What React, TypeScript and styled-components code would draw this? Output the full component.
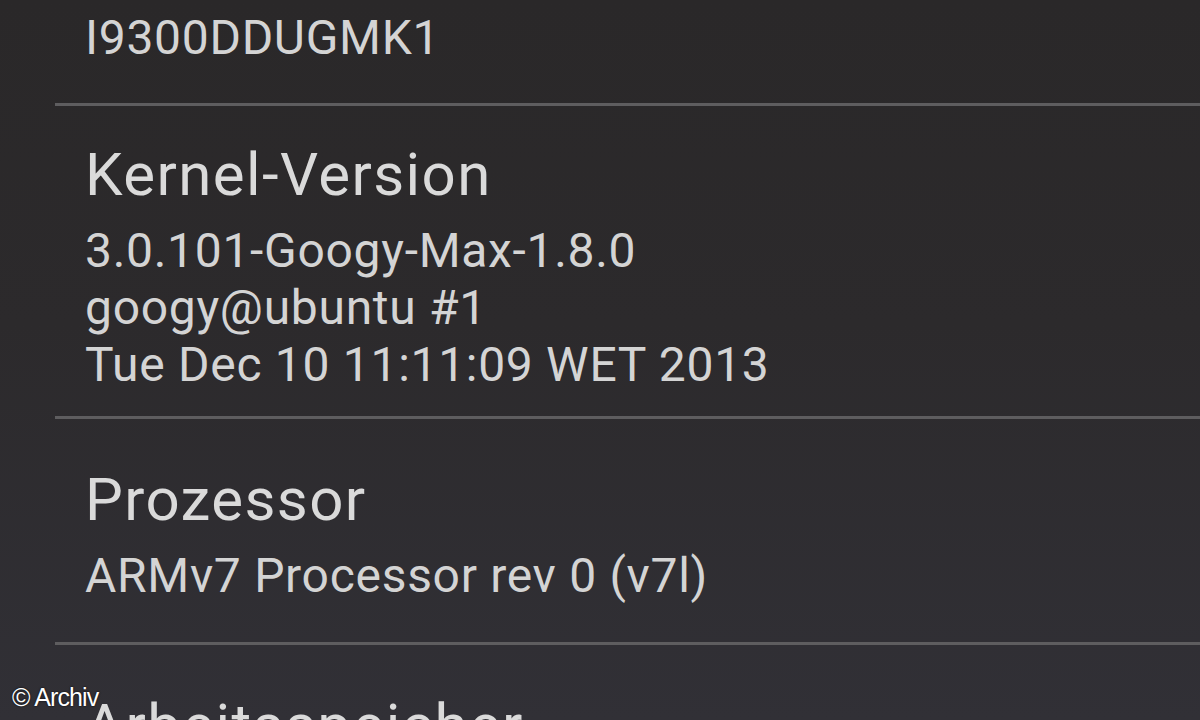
import React from "react";
import styled, { createGlobalStyle } from "styled-components";

const GlobalStyle = createGlobalStyle`
  html, body {
    margin: 0;
    padding: 0;
    height: 100%;
    overflow: hidden;
  }
  body {
    background: #2b292a;
  }
`;

const Screen = styled.div`
  position: relative;
  width: 1200px;
  height: 720px;
  overflow: hidden;
  background: linear-gradient(180deg, #2a2829 0%, #2c2a2c 45%, #313036 100%);
  font-family: Roboto, "Liberation Sans", sans-serif;
  color: #d6d6d6;
`;

const List = styled.div`
  display: flex;
  flex-direction: column;
`;

const Item = styled.div<{ $top: number; $bottom: number }>`
  padding: ${(p) => p.$top}px 0 ${(p) => p.$bottom}px 85px;
`;

const Title = styled.div`
  font-size: 60px;
  line-height: 70px;
  letter-spacing: 1.4px;
  margin-bottom: 12px;
  color: #dadada;
  white-space: nowrap;
`;

const Summary = styled.div`
  font-size: 48px;
  line-height: 57px;
  letter-spacing: 0.7px;
  color: #d4d4d4;
  white-space: nowrap;
`;

const Divider = styled.div`
  height: 3px;
  margin-left: 55px;
  background: #5e5d5f;
`;

const Credit = styled.div`
  position: absolute;
  left: 12px;
  bottom: 8px;
  font-family: "Liberation Sans", Arial, sans-serif;
  font-size: 25px;
  letter-spacing: -0.9px;
  color: #ffffff;
  text-shadow: 0 0 2px #000;
`;

type Info = {
  title?: string;
  lines: string[];
  top: number;
  bottom: number;
};

const items: Info[] = [
  { lines: ["I9300DDUGMK1"], top: 9, bottom: 37 },
  {
    title: "Kernel-Version",
    lines: [
      "3.0.101-Googy-Max-1.8.0",
      "googy@ubuntu #1",
      "Tue Dec 10 11:11:09 WET 2013",
    ],
    top: 34,
    bottom: 23,
  },
  {
    title: "Prozessor",
    lines: ["ARMv7 Processor rev 0 (v7l)"],
    top: 46,
    bottom: 38,
  },
  { title: "Arbeitsspeicher", lines: [], top: 46, bottom: 0 },
];

const App = () => {
  return (
    <Screen>
      <GlobalStyle />
      <List>
        {items.map((item, i) => (
          <React.Fragment key={i}>
            <Item $top={item.top} $bottom={item.bottom}>
              {item.title && <Title>{item.title}</Title>}
              {item.lines.map((line) => (
                <Summary key={line}>{line}</Summary>
              ))}
            </Item>
            {i < items.length - 1 && <Divider />}
          </React.Fragment>
        ))}
      </List>
      <Credit>© Archiv</Credit>
    </Screen>
  );
};

export default App;
